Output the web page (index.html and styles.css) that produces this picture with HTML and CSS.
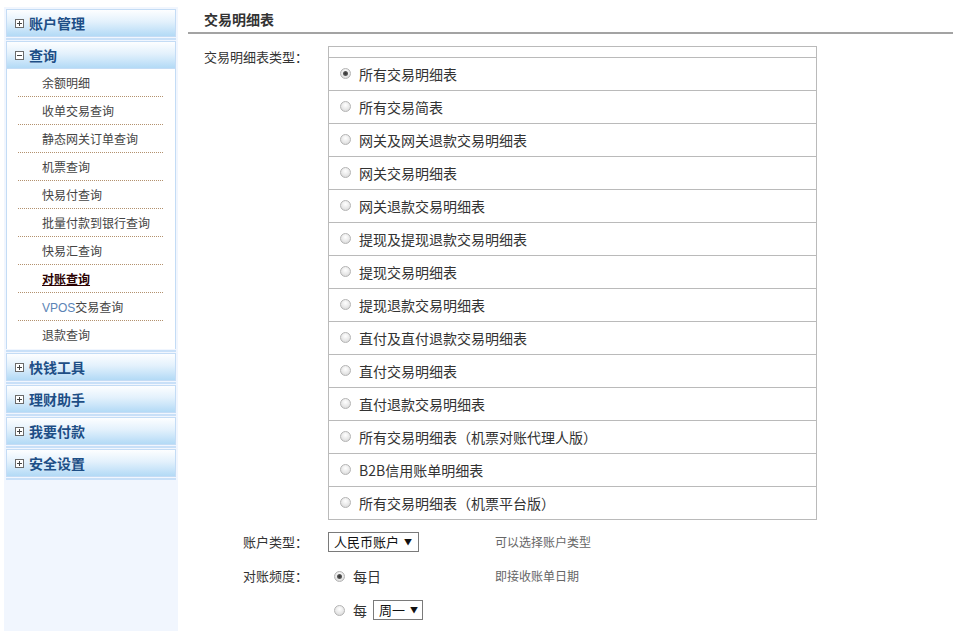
FILE: index.html
```html
<!DOCTYPE html>
<html lang="zh-CN">
<head>
<meta charset="utf-8">
<title>交易明细表</title>
<link rel="stylesheet" href="styles.css">
</head>
<body>
<div class="page">
  <aside class="sidebar">
    <div class="group">
      <div class="hd"><svg class="ico" width="9" height="9" viewBox="0 0 9 9"><rect x="0.5" y="0.5" width="8" height="8" fill="#fff" stroke="#6b6b6b"/><path d="M2 4.5H7M4.5 2V7" stroke="#444"/></svg>账户管理</div>
    </div>
    <div class="group">
      <div class="hd"><svg class="ico" width="9" height="9" viewBox="0 0 9 9"><rect x="0.5" y="0.5" width="8" height="8" fill="#fff" stroke="#6b6b6b"/><path d="M2 4.5H7" stroke="#444"/></svg>查询</div>
      <ul class="menu">
        <li><span>余额明细</span></li>
        <li><span>收单交易查询</span></li>
        <li><span>静态网关订单查询</span></li>
        <li><span>机票查询</span></li>
        <li><span>快易付查询</span></li>
        <li><span>批量付款到银行查询</span></li>
        <li><span>快易汇查询</span></li>
        <li class="active"><span>对账查询</span></li>
        <li><span><em class="latin">VPOS</em>交易查询</span></li>
        <li><span>退款查询</span></li>
      </ul>
    </div>
    <div class="group">
      <div class="hd"><svg class="ico" width="9" height="9" viewBox="0 0 9 9"><rect x="0.5" y="0.5" width="8" height="8" fill="#fff" stroke="#6b6b6b"/><path d="M2 4.5H7M4.5 2V7" stroke="#444"/></svg>快钱工具</div>
    </div>
    <div class="group">
      <div class="hd"><svg class="ico" width="9" height="9" viewBox="0 0 9 9"><rect x="0.5" y="0.5" width="8" height="8" fill="#fff" stroke="#6b6b6b"/><path d="M2 4.5H7M4.5 2V7" stroke="#444"/></svg>理财助手</div>
    </div>
    <div class="group">
      <div class="hd"><svg class="ico" width="9" height="9" viewBox="0 0 9 9"><rect x="0.5" y="0.5" width="8" height="8" fill="#fff" stroke="#6b6b6b"/><path d="M2 4.5H7M4.5 2V7" stroke="#444"/></svg>我要付款</div>
    </div>
    <div class="group">
      <div class="hd"><svg class="ico" width="9" height="9" viewBox="0 0 9 9"><rect x="0.5" y="0.5" width="8" height="8" fill="#fff" stroke="#6b6b6b"/><path d="M2 4.5H7M4.5 2V7" stroke="#444"/></svg>安全设置</div>
    </div>
  </aside>

  <main class="main">
    <h2 class="title">交易明细表</h2>
    <div class="form">
      <div class="row row-type">
        <div class="label">交易明细表类型：</div>
        <div class="opts">
          <div class="opts-top"></div>
          <div class="opt"><span class="radio checked"></span>所有交易明细表</div>
          <div class="opt"><span class="radio"></span>所有交易简表</div>
          <div class="opt"><span class="radio"></span>网关及网关退款交易明细表</div>
          <div class="opt"><span class="radio"></span>网关交易明细表</div>
          <div class="opt"><span class="radio"></span>网关退款交易明细表</div>
          <div class="opt"><span class="radio"></span>提现及提现退款交易明细表</div>
          <div class="opt"><span class="radio"></span>提现交易明细表</div>
          <div class="opt"><span class="radio"></span>提现退款交易明细表</div>
          <div class="opt"><span class="radio"></span>直付及直付退款交易明细表</div>
          <div class="opt"><span class="radio"></span>直付交易明细表</div>
          <div class="opt"><span class="radio"></span>直付退款交易明细表</div>
          <div class="opt"><span class="radio"></span>所有交易明细表（机票对账代理人版）</div>
          <div class="opt"><span class="radio"></span>B2B信用账单明细表</div>
          <div class="opt"><span class="radio"></span>所有交易明细表（机票平台版）</div>
        </div>
      </div>

      <div class="row row-acct">
        <div class="label">账户类型：</div>
        <div class="ctrl"><span class="select sel-acct">人民币账户<i class="arrow">▼</i></span></div>
        <div class="hint">可以选择账户类型</div>
      </div>

      <div class="row row-freq">
        <div class="label">对账频度：</div>
        <div class="ctrl"><span class="radio checked"></span><span class="rtext">每日</span></div>
        <div class="hint">即接收账单日期</div>
      </div>

      <div class="row row-week">
        <div class="label"></div>
        <div class="ctrl"><span class="radio"></span><span class="rtext">每</span><span class="select sel-week">周一<i class="arrow">▼</i></span></div>
      </div>
    </div>
  </main>
</div>
</body>
</html>
```

FILE: styles.css
```css
* { box-sizing: border-box; }

html, body {
  margin: 0;
  padding: 0;
  background: #fff;
  font-family: "Noto Sans CJK SC", "Liberation Sans", sans-serif;
  color: #333;
}

.page {
  display: flex;
  align-items: flex-start;
  height: 631px;
  overflow: hidden;
}

/* ---------- sidebar ---------- */
.sidebar {
  width: 174px;
  margin: 7px 0 0 4px;
  padding: 2px 2px 0;
  background: #f1f6fe;
  min-height: 624px;
  flex: none;
}

.group {
  border-bottom: 2px solid #c9e0f8;
  padding-bottom: 1px;
  margin-bottom: 1px;
}

.hd {
  height: 28px;
  border: 1px solid #c4dcf5;
  background: linear-gradient(#fdfeff 0%, #e3f1fc 45%, #b3daf6 100%);
  display: flex;
  align-items: center;
  padding-left: 8px;
  font-size: 14px;
  font-weight: bold;
  color: #1d4e86;
  line-height: 26px;
}

.ico {
  display: block;
  margin-right: 5px;
  flex: none;
}

.menu {
  list-style: none;
  margin: 0;
  padding: 0;
  background: #fff;
  border-left: 1px solid #c4dcf5;
  border-right: 1px solid #c4dcf5;
}

.menu li {
  margin: 0 12px 0 11px;
  height: 28px;
  border-bottom: 1px dotted #b3916e;
  font-size: 12px;
  line-height: 27px;
  padding-left: 24px;
  color: #444;
}

.menu li:last-child {
  border-bottom: none;
}

.menu li.active span {
  font-weight: bold;
  color: #2a0000;
  text-decoration: underline;
}

.menu .latin {
  font-style: normal;
  font-family: "Liberation Sans", sans-serif;
  color: #5b84b6;
}

/* ---------- main ---------- */
.main {
  flex: 1;
  margin: 0 16px 0 10px;
}

.title {
  margin: 0;
  height: 34px;
  padding: 7px 0 0 16px;
  font-size: 14px;
  line-height: 24px;
  font-weight: bold;
  color: #333;
  border-bottom: 2px solid #a3a3a3;
}

.form {
  margin-top: 12px;
}

.row {
  display: flex;
  align-items: flex-start;
}

.label {
  width: 120px;
  flex: none;
  margin-right: 20px;
  text-align: right;
  font-size: 13px;
  line-height: 20px;
  color: #333;
  white-space: nowrap;
}

.row-type .label {
  padding-top: 1px;
}

.opts {
  width: 489px;
  border: 1px solid #bababa;
}

.opts-top {
  height: 11px;
  border-bottom: 1px solid #bababa;
}

.opt {
  height: 33px;
  border-bottom: 1px solid #bababa;
  display: flex;
  align-items: center;
  padding-left: 11px;
  padding-bottom: 1px;
  font-size: 14px;
  color: #333;
}

.opt:last-child {
  border-bottom: none;
  height: 32px;
}

.radio {
  width: 11px;
  height: 11px;
  border-radius: 50%;
  border: 1px solid #b4b4b4;
  background: radial-gradient(circle at 50% 35%, #ffffff 0%, #e6e6e6 60%, #cfcfcf 100%);
  margin-right: 8px;
  flex: none;
  position: relative;
}

.radio.checked::after {
  content: "";
  position: absolute;
  left: 2px;
  top: 2px;
  width: 5px;
  height: 5px;
  border-radius: 50%;
  background: radial-gradient(circle, #333 0%, #555 60%, #888 100%);
}

.row-acct { margin-top: 12px; }
.row-freq { margin-top: 14px; }
.row-week { margin-top: 14px; }

.ctrl {
  width: 167px;
  flex: none;
  display: flex;
  align-items: center;
  height: 20px;
}

.row-freq .ctrl,
.row-week .ctrl {
  padding-left: 6px;
}

.rtext {
  font-size: 14px;
  line-height: 20px;
  color: #333;
  margin-right: 6px;
}

.select {
  display: inline-flex;
  align-items: center;
  height: 20px;
  border: 1px solid #7a7a7a;
  background: #fff;
  font-size: 13px;
  color: #111;
  padding-left: 5px;
  line-height: 18px;
}

.sel-acct { width: 91px; }
.sel-week { width: 50px; }

.arrow {
  font-style: normal;
  font-size: 8px;
  margin-left: 5px;
  color: #111;
}

.hint {
  font-size: 12px;
  line-height: 20px;
  color: #666;
}
```
